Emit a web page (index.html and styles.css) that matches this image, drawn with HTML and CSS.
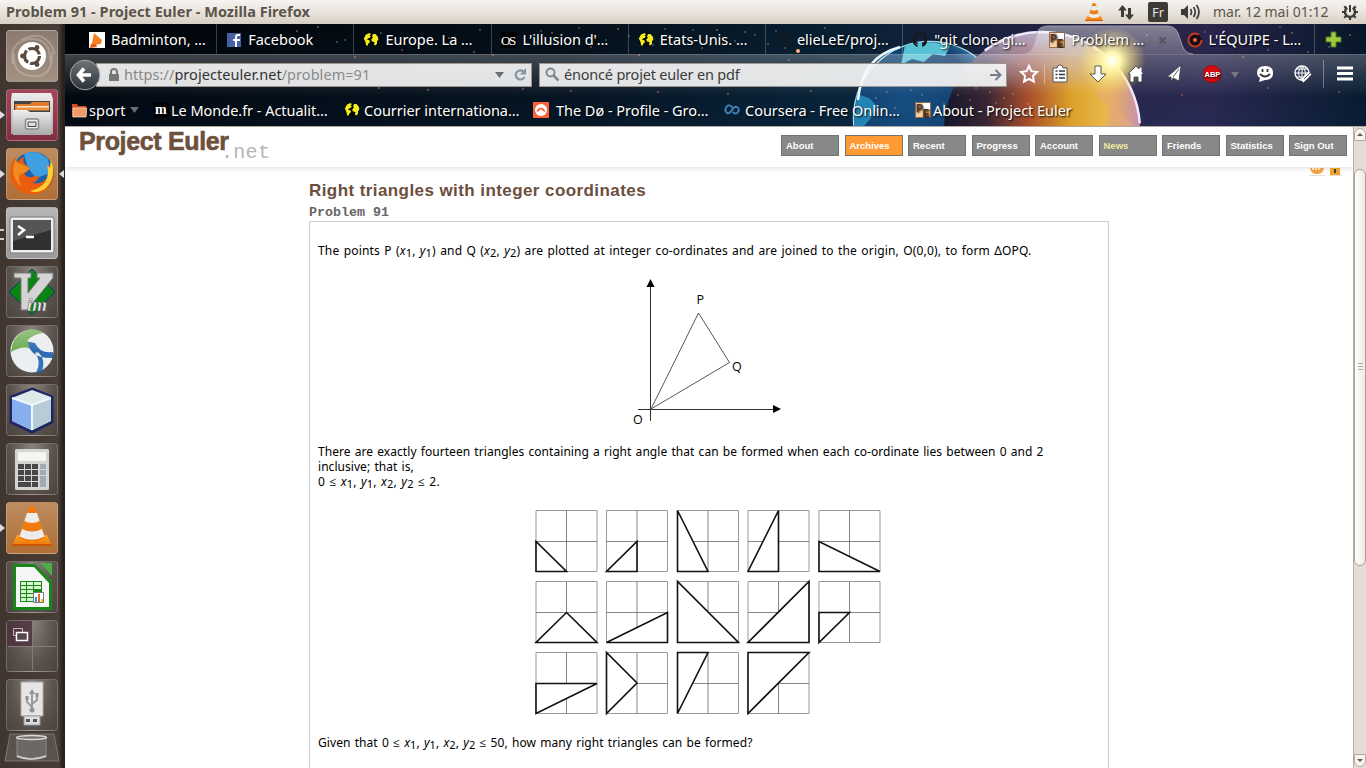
FILE: index.html
```html
<!DOCTYPE html>
<html lang="fr">
<head>
<meta charset="utf-8">
<title>Problem 91 - Project Euler</title>
<link rel="stylesheet" href="styles.css">
</head>
<body>
<svg class="defs" width="0" height="0">
  <defs>
    <linearGradient id="tileShine" x1="0" y1="0" x2="0" y2="1"><stop offset="0" stop-color="#fff" stop-opacity=".32"/><stop offset=".5" stop-color="#fff" stop-opacity=".06"/><stop offset="1" stop-color="#fff" stop-opacity=".13"/></linearGradient>
    <linearGradient id="silver" x1="0" y1="0" x2="0" y2="1"><stop offset="0" stop-color="#eee"/><stop offset="1" stop-color="#a9a9a9"/></linearGradient>
    <linearGradient id="orange" x1="0" y1="0" x2="0" y2="1"><stop offset="0" stop-color="#ffa52c"/><stop offset="1" stop-color="#ee7200"/></linearGradient>
    <symbol id="globe" viewBox="0 0 16 16"><circle cx="8" cy="8" r="7.6" fill="#050a08"/><path d="M.8 6.500L3 2.500 6.500 1 8 2.300 6.400 3.600 8 4.500 6.400 6 5 6.500 4 7.500 6.500 8.500 7 10 5 12 4.500 14 3 13 2.500 10zM9 4.500L10 2 12.500 2 15 5 15.300 8 14 9 14 12 12 13.500 11 12.500 11.500 10 9 9.500 8.200 7.500 10 5.500z" fill="#f4ec1f"/></symbol>
    <symbol id="github" viewBox="0 0 16 16"><path d="M8 .5A7.5 7.5 0 0 0 5.6 15V12.7Q3.8 13 3 11.3 3.9 11.2 4.5 12L5.8 12Q6 11.2 6.4 10.9 3 10.4 3.3 6.9 3.3 5.6 4.1 4.9L4.2 2.9 6.1 3.6 9.9 3.6 11.8 2.9 11.9 4.9Q12.7 5.7 12.7 7 12.8 10.4 9.600 10.9 10.2 11.3 10.2 12.5V15A7.5 7.5 0 0 0 8 .5z" fill="#15191d"/></symbol>
    <symbol id="pe" viewBox="0 0 16 16"><path d="M.5.5h15v15H.5z" fill="#fff" stroke="#8d6c53"/><path d="M1 1h7v14H1z" fill="#fad0a5"/><path d="M8 8h7v7H8z" fill="#f5a556"/><text x="1" y="10" class="pe-letter">P</text><text x="7.500" y="14.500" class="pe-letter">E</text></symbol>
    <symbol id="cone" viewBox="0 0 44 44"><path d="M7 31H37L42 42H2z" fill="url(#orange)"/><path d="M19 3Q22 1 25 3L35 34Q22 41 9 34z" fill="#f07c10"/><path d="M17 9h10l2.600 8Q22 21 14.400 17zM12 25Q22 30 32 25l2.500 7.500Q22 39 9.500 32.500z" fill="#ececea"/><path d="M3 40h38l1 2H2z" fill="#c95400"/></symbol>
  </defs>
</svg>

<header class="topbar">
  <span class="window-title">Problem 91 - Project Euler - Mozilla Firefox</span>
  <div class="indicators">
    <svg class="ind-cone" width="20" height="22"><use href="#cone"/></svg>
    <svg class="ind-net" width="18" height="17"><path d="M5.500 1L10 6.500H7V13H4V6.500H1zM12.500 16L17 10.500H14V4H11V10.500H8z" fill="#3c3b37"/></svg>
    <span class="ind-lang">Fr</span>
    <svg class="ind-sound" width="20" height="16"><path d="M1 5h3l4-4v14l-4-4H1z" fill="#3c3b37"/><path d="M10.500 5q2 3 0 6M13.500 3q3.500 5 0 10M16.500 1q5 7 0 14" fill="none" stroke="#3c3b37" stroke-width="1.700"/></svg>
    <span class="clock">mar. 12 mai 01:12</span>
    <svg class="ind-gear" width="18" height="18" viewBox="0 0 18 18"><g fill="none" stroke="#3c3b37"><path d="M6.200 4.800A5 5 0 1 0 11.800 4.800" stroke-width="2.400"/><path d="M9 2v7" stroke-width="2"/><path d="M1 9h2.500M14.500 9H17M3.300 3.300l2 2M14.700 3.300l-2 2M3.300 14.700l2-2M14.700 14.700l-2-2M9 14v3" stroke-width="2.200"/></g></svg>
  </div>
</header>

<div class="desktop">
  <nav class="launcher">
    <div class="tile dash"><svg viewBox="0 0 52 52"><path d="M7 34Q2 12 24 9 45 8 44 31M15 10Q40-3 49 24M8 24Q6 47 31 46 47 45 46 22" fill="none" stroke="#fff" stroke-opacity=".22" stroke-width="2"/><circle cx="26" cy="26" r="14" fill="#fff"/><circle cx="26" cy="26" r="7.500" fill="none" stroke="#594b42" stroke-width="3.200" stroke-dasharray="13.700 2"/><g fill="#594b42"><circle cx="16.500" cy="26" r="2.400"/><circle cx="31" cy="17.500" r="2.400"/><circle cx="31" cy="34.500" r="2.400"/></g></svg></div>
    <div class="tile files running"><svg viewBox="0 0 52 52"><path d="M6 4h39l2 6v35H5V10z" fill="url(#silver)"/><path d="M8 12h36v12H8z" fill="#444"/><path d="M9 15h15l2-2h17v8H9z" fill="#e07b2b"/><path d="M11 17h32v3H11z" fill="#ffe6c8"/><path d="M10 18.500h33v3H10z" fill="#ed9242"/><path d="M7 21h14l3 2h21v23H7z" fill="url(#silver)"/><rect x="19.500" y="30" width="13" height="10" rx="2" fill="#eee" stroke="#888" stroke-width="1.500"/><path d="M22 33h8v4.500h-8z" fill="#ddd" stroke="#444"/></svg></div>
    <div class="tile firefox running active"><svg viewBox="0 0 52 52"><circle cx="27" cy="25" r="21" fill="#1c62ab"/><path d="M18 6Q30 0 42 11L45 25 30 30 22 20z" fill="#3f9fe0"/><path d="M45 14Q52 29 41 41 30 50 18 45 4 39 4 25 4 16 9 10L12 14Q14 10 18 9 16 14 20 17L24 20Q21 25 18 25 20 30 26 29 30 27 33 29 31 34 26 35 36 37 41 30 43 24 41 17 44 20 45 14z" fill="#e95d0c"/><path d="M45 12Q51 28 40 40 32 46 24 43 38 40 41 30 43 24 41 17L44 20z" fill="#fdcf31"/><path d="M9 12Q3 29 16 39 9 26 18 25L24 20 17 17 12 15z" fill="#f18a20"/></svg></div>
    <div class="tile terminal running2"><svg viewBox="0 0 52 52"><rect x="4" y="10" width="44" height="36" rx="2" fill="#eee" stroke="#777"/><path d="M7 13h38v30H7z" fill="#303030"/><path d="M7 13h38v10L7 34z" fill="#555"/><path d="M12 19l6 4-6 5M20 30h8" fill="none" stroke="#fff" stroke-width="2.500"/></svg></div>
    <div class="tile plain"><svg viewBox="0 0 52 52"><path d="M26 3L49 26 26 49 3 26z" fill="#078412" stroke="#10356a"/><path d="M8 7h17v5h-3v15L34 12h-3V7h16v5L21 44h-6V12H8z" fill="#d4d4d4" stroke="#777"/><text x="21" y="45" class="vim">im</text></svg></div>
    <div class="tile plain"><svg viewBox="0 0 52 52"><circle cx="26" cy="26" r="21.500" fill="#e8edef"/><path d="M5 27Q6 12 17 7 28 1 37 8 27 9 21 16 31 18 35 28L29 27Q20 18 5 27z" fill="#65a84a"/><path d="M22 17Q24 34 47 33L47 27Q34 29 29 18zM32 27Q40 34 36 47L30 48Q36 36 29 28z" fill="#1e61ae"/><circle cx="26" cy="26" r="21.500" fill="url(#tileShine)"/></svg></div>
    <div class="tile plain"><svg viewBox="0 0 52 52"><path d="M26 5L46 13V38L26 48 5 38V13z" fill="#cfdfe8" stroke="#202765" stroke-width="3"/><path d="M6 14L26 21V46L6 37z" fill="#89aef0"/><path d="M26 21L45 14V37L26 46z" fill="#b8ccd6"/><path d="M26 6L45 13 26 21 6 14z" fill="#dcebea"/><path d="M26 21v25M6 14l20 7 19-7" fill="none" stroke="#eef8ff" stroke-width="2"/></svg></div>
    <div class="tile plain"><svg viewBox="0 0 52 52"><rect x="9" y="6" width="34" height="41" rx="1.500" fill="#d5d4d1"/><path d="M12 9h28v9H12z" fill="#f5f5f2"/><g fill="#484848"><path d="M12 21h6v5h-6zM19 21h6v5h-6zM26 21h6v5h-6zM12 27h6v5h-6zM19 27h6v5h-6zM26 27h6v5h-6zM12 33h6v5h-6zM19 33h6v5h-6zM26 33h6v5h-6zM12 39h13v5H12zM26 39h6v5h-6z"/></g><path d="M34 21h6v5h-6zM34 27h6v5h-6zM34 33h6v11h-6z" fill="#9faeb6"/></svg></div>
    <div class="tile vlc running"><svg viewBox="0 0 52 52"><use href="#cone" x="4" y="2" width="44" height="44"/></svg></div>
    <div class="tile plain"><svg viewBox="0 0 52 52"><path d="M7 3h22l17 17v29H7z" fill="#188618"/><path d="M34 2h12v13z" fill="#4bad43"/><path d="M10 6h18l15 16v24H10z" fill="#f6f6f6"/><path d="M14 20h22v21H14z" fill="#188618"/><path d="M15 21h5v3h-5zm6 0h6v3h-6zm7 0h7v3h-7zM15 25h5v3h-5zm6 0h6v3h-6zm7 0h7v3h-7zM15 29h5v3h-5zm6 0h6v3h-6zM15 33h5v3h-5zm6 0h6v3h-6zM15 37h5v3h-5zm6 0h6v3h-6z" fill="#d7f5cf"/><path d="M27.500 31.500h10v10h-10z" fill="#fff" stroke="#777"/><path d="M29 36h2v5h-2z" fill="#289ce2"/><path d="M32 33h2v8h-2z" fill="#df6a24"/><path d="M35 38h2v3h-2z" fill="#f0b626"/></svg></div>
    <div class="tile plain"><svg viewBox="0 0 52 52"><path d="M1 1h25v25H1z" fill="#4b303b" opacity=".8"/><path d="M26.500 2v48M2 26.500h48" stroke="#837b75"/><path d="M7.500 8.500h9v7h-9z" fill="none" stroke="#bbb"/><path d="M10.500 12.500h11v8h-11z" fill="#5a4650" stroke="#fff" stroke-width="1.500"/></svg></div>
    <div class="tile plain"><svg viewBox="0 0 52 52"><path d="M15 3h22v34H15z" fill="#e5e5e5" stroke="#aaa"/><path d="M18 37h16v9H18z" fill="#ddd" stroke="#999"/><path d="M20 40h4v3h-4zM27 40h4v3h-4z" fill="#555"/><path d="M26 12v19M26 28l-5-5v-4M26 25l5-4v-5" fill="none" stroke="#929292" stroke-width="1.700"/><circle cx="26" cy="31" r="2.500" fill="#929292"/><path d="M23 15l3-5 3 5zM19.500 17h3v4h-3zM29.500 14h3v4h-3z" fill="#929292"/></svg></div>
    <svg class="trash" viewBox="0 0 56 31" width="56" height="31"><path d="M6 1H50L55 28H1z" fill="#5a524c" stroke="#7d766f"/><path d="M13 5h29v19Q27 29 13 24z" fill="#6d6864" stroke="#8d8984"/><ellipse cx="27.500" cy="4.500" rx="15" ry="2" fill="#77736f" stroke="#ddd" stroke-width="1.300"/><path d="M13 23Q27 29 42 23" fill="none" stroke="#d6d4d0" stroke-width="1.500"/></svg>
  </nav>

  <main class="browser">
    <section class="chrome">
      <svg class="theme" width="1301" height="102" viewBox="65 24 1301 102">
        <defs>
          <linearGradient id="sky"><stop offset="0" stop-color="#010409"/><stop offset=".4" stop-color="#061421"/><stop offset=".6" stop-color="#0a273f"/><stop offset=".78" stop-color="#302b55"/><stop offset=".88" stop-color="#342d5c"/><stop offset="1" stop-color="#071c31"/></linearGradient>
          <linearGradient id="low" x1="0" y1="0" x2="0" y2="1"><stop offset="0" stop-color="#000" stop-opacity=".2"/><stop offset="1" stop-color="#08213c" stop-opacity=".25"/></linearGradient>
          <radialGradient id="earth" cx=".35" cy=".4" r=".7"><stop offset="0" stop-color="#164e82"/><stop offset=".6" stop-color="#123e6c"/><stop offset="1" stop-color="#5ab1dd"/></radialGradient>
          <linearGradient id="warm"><stop offset="0" stop-color="#14182d"/><stop offset=".22" stop-color="#392533"/><stop offset=".43" stop-color="#a84e2c"/><stop offset=".65" stop-color="#dca029"/><stop offset=".82" stop-color="#e8b84a"/><stop offset="1" stop-color="#c891ae"/></linearGradient>
          <linearGradient id="haze" x1="0" y1="0" x2="0" y2="1"><stop offset="0" stop-color="#b4aed2" stop-opacity=".95"/><stop offset=".3" stop-color="#b4aed2" stop-opacity="0"/></linearGradient>
          <radialGradient id="sun"><stop offset="0" stop-color="#fff"/><stop offset=".25" stop-color="#fff69b"/><stop offset="1" stop-color="#ffcf28" stop-opacity="0"/></radialGradient>
        </defs>
        <path d="M65 24h1301v103H65z" fill="url(#sky)"/><path d="M65 24h1301v103H65z" fill="url(#low)"/>
        <g fill="none" stroke-linecap="round" stroke-width="1.800">
          <path stroke="#b5623e" opacity=".85" d="M297 31h0M318 27h0M355 57h0M379 88h0M402 50h0M428 90h0M449 38h0M474 52h0M493 55h0M523 89h0M536 42h0M552 33h0M571 91h0M591 47h0M618 29h0M639 55h0M658 92h0M684 37h0M702 48h0M717 30h0M728 94h0M745 32h0M768 44h0M789 60h0M802 39h0M811 91h0M825 28h0M1147 35h0M1182 95h0M1200 43h0M1224 31h0M1243 57h0M1268 88h0M1292 33h0M1308 52h0M1339 92h0M1350 35h0"/>
          <path stroke="#3b7d86" opacity=".8" d="M337 42h0M345 40h0M381 33h0M424 43h0M480 30h0M515 44h0M541 31h0M579 28h0M606 40h0M629 36h0M653 45h0M665 29h0M693 30h0M710 45h0M735 41h0M755 35h0M776 31h0M785 48h0M838 35h0M1205 32h0M1240 39h0M1268 50h0M1280 27h0M1329 47h0"/>
        </g>
        <circle cx="798" cy="51" r="2" fill="#ffb481"/>
        <circle cx="930" cy="118" r="76.500" fill="url(#earth)" stroke="#a2def8" stroke-width="1.500"/>
        <path d="M905 45Q927 39 950 46L945 56 933 54 924 62 912 59 901 65z" fill="#58c2d4"/><path d="M857 94l12 4 10 10-8 10-7 8H854z" fill="#2384b4"/>
        <path d="M858 100Q862 57 900 47" fill="none" stroke="#e3faff" stroke-width="2.500"/>
        <circle cx="1042" cy="130" r="98" fill="url(#warm)"/><circle cx="1042" cy="130" r="98" fill="url(#haze)"/>
        <circle cx="1042" cy="130" r="98" fill="none" stroke="#f1e7ff" stroke-width="2.500" stroke-dasharray="208 500" stroke-dashoffset="-400"/>
        <path d="M1103 82l15 9 2 18 14 18h-29l5-18-14-15z" fill="#e7a979" opacity=".55"/>
        <path stroke="#fac172" stroke-linecap="round" stroke-width="1.500" opacity=".65" d="M876 98h0M887 92h0M895 108h0M903 85h0M911 90h0M922 95h0M944 104h0M958 95h0M966 117h0M976 88h0M982 112h0M990 92h0M996 103h0M1002 79h0M1008 113h0M1013 94h0M1019 64h0M1028 104h0M984 77h0M970 100h0M1004 98h0"/>
        <circle cx="1112" cy="61" r="34" fill="url(#sun)"/>
      </svg>
      <div class="tabs">
        <div class="tab"><svg width="16" height="16"><path d="M0 0h16v16H0z" fill="#fff"/><path d="M5 1l8 7-1 4-6 1-4 2 1-4z" fill="#f58120"/><path d="M2 12h5l1 3-7 1z" fill="#e85b13"/></svg><span>Badminton, …</span></div>
        <div class="tab"><svg width="16" height="16"><path d="M1 1h14v14H1z" fill="#4662a5"/><path d="M9 15V9h-2V7h2V5q0-3 3-3h2v2h-2q-1 0-1 1v2h3v2h-3v6z" fill="#fff"/></svg><span>Facebook</span></div>
        <div class="tab"><svg width="16" height="16"><use href="#globe"/></svg><span>Europe. La …</span></div>
        <div class="tab"><svg width="16" height="16"><path d="M0 0h16v16H0z"/><text x="0" y="13" class="os">OS</text></svg><span>L'illusion d'…</span></div>
        <div class="tab"><svg width="16" height="16"><use href="#globe"/></svg><span>Etats-Unis. …</span></div>
        <div class="tab"><svg width="16" height="16"><use href="#github"/></svg><span>elieLeE/proj…</span></div>
        <div class="tab nosep"><svg width="16" height="16"><use href="#github"/></svg><span>"git clone gi…</span></div>
        <div class="tab current"><svg class="tab-shape" width="170" height="32" viewBox="0 0 170 32"><defs><linearGradient id="tabFill" x1="0" y1="0" x2="0" y2="1"><stop offset="0" stop-color="#fff" stop-opacity=".42"/><stop offset="1" stop-color="#fff" stop-opacity=".25"/></linearGradient></defs><path d="M0 31Q8 31 11 22L14 10Q16 3 25 3H144Q152 3 155 10L159 22Q162 31 170 31z" fill="url(#tabFill)"/><path d="M0 31Q8 31 11 22L14 10Q16 3 25 3H144Q152 3 155 10L159 22Q162 31 170 31" fill="none" stroke="#aaa7b4" stroke-opacity=".8"/></svg><svg class="tab-icon" width="16" height="16"><use href="#pe"/></svg><span class="tab-label">Problem …</span><svg class="tab-close" width="9" height="9"><path d="M1.500 1.500l6 6M7.500 1.500l-6 6" stroke="#55545b" stroke-width="2"/></svg></div>
        <div class="tab"><svg width="16" height="16"><circle cx="8" cy="8" r="6.500" fill="#170d10" stroke="#c63a1d" stroke-width="2" stroke-dasharray="34 7"/><circle cx="8" cy="8" r="2" fill="#ef6b3b"/></svg><span>L'ÉQUIPE - L…</span></div>
        <svg class="newtab" width="17" height="17"><path d="M6 1h5v5h5v5h-5v5H6v-5H1V6h5z" fill="#9bcb3c" stroke="#4f7327"/></svg>
      </div>
      <div class="toolbar">
        <svg class="back" width="32" height="32"><defs><linearGradient id="backFill" x1="0" y1="0" x2="0" y2="1"><stop offset="0" stop-color="#6f7377"/><stop offset="1" stop-color="#2a323b"/></linearGradient></defs><circle cx="16" cy="16" r="14.800" fill="url(#backFill)" stroke="#a1a4a8"/><path d="M15 9.500L9.500 16 15 22.500M10.500 16H22" fill="none" stroke="#fff" stroke-width="3.600"/></svg>
        <div class="field url"><svg width="12" height="14"><path d="M1 6h10v7H1z" fill="#777"/><path d="M3 7V4q0-3 3-3t3 3v3" fill="none" stroke="#777" stroke-width="2"/></svg><span>https://<b>projecteuler.net</b>/problem=91</span><svg class="drop" width="9" height="6"><path d="M0 0h9L4.500 6z" fill="#6b6e72"/></svg><svg class="reload" width="13" height="14"><path d="M10.500 9A4.600 4.600 0 1 1 9.500 3.500" fill="none" stroke="#8296a5" stroke-width="2.200"/><path d="M12 0v6.500H6z" fill="#8296a5"/></svg></div>
        <div class="field search"><svg width="15" height="15"><circle cx="5.500" cy="5.500" r="4" fill="none" stroke="#85888b" stroke-width="2"/><path d="M8.500 8.500l5 5" stroke="#85888b" stroke-width="2.500"/></svg><span>énoncé projet euler en pdf</span><svg class="go" width="12" height="12"><path d="M0 6h10M5.500 1L10.500 6l-5 5" fill="none" stroke="#747d89" stroke-width="2"/></svg></div>
        <svg class="tools" width="344" height="32" viewBox="0 0 344 32"><g fill="#fff" stroke="#343640" stroke-width=".8"><path d="M14 8l2.400 5.200 5.600.7-4.100 4 1 5.600L14 20.800l-4.900 2.700 1-5.600-4.100-4 5.600-.7z" fill="none" stroke="#fff" stroke-width="2"/><path d="M38 10h4q0-3 3-3t3 3h4v14H38z"/><path d="M40.500 13h2M44 13h6M40.500 16.500h2M44 16.500h6M40.500 20h2M44 20h6" stroke-width="1.500"/><path d="M80 8h6v8h5l-8 8-8-8h5z"/><path d="M113 16l8-8 3 3V9h3v5l2 2h-2v8h-4v-5h-4v5h-4v-8z"/><path d="M152 19l14-12-2 16-6-3-2 4v-5z"/><path d="M158 19l6-8" fill="none"/></g><path d="M193 8h8l4 4v8l-4 4h-8l-4-4v-8z" fill="#d70e11" stroke="#a40000"/><text x="189.500" y="19" class="abp">ABP</text><path d="M216 14h8l-4 6z" fill="#777982"/><g fill="#fff"><path d="M250 8q8 0 8 7t-8 7l-6 2 1-4q-3-2-3-5 0-7 8-7z"/></g><path d="M247.500 11v3M252.500 11v3M245 16q5 5 10 0" stroke="#343640" stroke-width="1.800" fill="none"/><g fill="none" stroke="#fff"><circle cx="287" cy="15" r="7" stroke-width="1.400"/><path d="M280 15h14M287 8v14M282 11h10M282 19h10M287 8q-7 7 0 14M287 8q7 7 0 14"/><path d="M287 23l8-8" stroke-width="4"/><path d="M289 21l6-6" stroke="#555" stroke-width="1"/></g><path d="M29.500 7v19M308.500 2v28" stroke="#fff" stroke-opacity=".35"/><path d="M322 10h16M322 15.500h16M322 21h16" stroke="#fff" stroke-width="3"/></svg>
      </div>
      <div class="bookmarks">
        <div class="bm b1"><svg width="16" height="15"><path d="M1 1h5l1 2h8v11H1z" fill="#cf4d1e"/><path d="M2 5h14l-1 9H2z" fill="#f09a6c" stroke="#ffe1cd" stroke-width=".7"/></svg><span>sport</span><svg class="bm-drop" width="9" height="6"><path d="M0 0h9L4.500 6z" fill="#686c70"/></svg></div>
        <div class="bm b2"><svg width="16" height="16"><path d="M0 0h16v16H0z"/><text x="2" y="12" class="monde">m</text></svg><span>Le Monde.fr - Actualit…</span></div>
        <div class="bm b3"><svg width="16" height="16"><use href="#globe"/></svg><span>Courrier internationa…</span></div>
        <div class="bm b4"><svg width="16" height="16"><path d="M0 0h16v16H0z" fill="#fa633a"/><circle cx="8" cy="8" r="6" fill="#fff"/><path d="M4 10Q3 7 8 5.500 13 7 12 10L10 9 8 7 6 9z" fill="#fa633a"/></svg><span>The Dø - Profile - Gro…</span></div>
        <div class="bm b5"><svg width="16" height="16"><path d="M8.500 5.500Q5 1.500 2.500 5T3 11Q5.500 12 8 8T13 5Q16 7 14 10T8.500 10" fill="none" stroke="#3e7fb5" stroke-width="2"/></svg><span>Coursera - Free Onlin…</span></div>
        <div class="bm b6"><svg width="16" height="16"><use href="#pe"/></svg><span>About - Project Euler</span></div>
      </div>
    </section>

    <section class="viewport">
      <div class="page">
        <div class="site-head">
          <div class="logo"><span class="logo-main">Project Euler</span><span class="logo-net">.net</span></div>
          <ul class="menu"><li>About</li><li class="on">Archives</li><li>Recent</li><li>Progress</li><li>Account</li><li class="news">News</li><li>Friends</li><li>Statistics</li><li>Sign Out</li></ul>
        </div>
        <svg class="status-icons" width="34" height="10"><path d="M1 0h14q-1 6-7 6T1 0z" fill="#f2a044"/><path d="M4 0v2M7 0v2M10 0v2" stroke="#fff3d8" stroke-width="1.500"/><path d="M0 7.500h16M20 7.500h13" stroke="#eadfd8"/><path d="M21 0h10v7H21z" fill="#eda12c"/><path d="M25 1h2v4h-2z" fill="#443b34"/></svg>
        <article class="content">
          <h2>Right triangles with integer coordinates</h2>
          <h3>Problem 91</h3>
          <div class="problem">
            <p class="p1">The points P (<i>x</i><sub>1</sub>, <i>y</i><sub>1</sub>) and Q (<i>x</i><sub>2</sub>, <i>y</i><sub>2</sub>) are plotted at integer co-ordinates and are joined to the origin, O(0,0), to form ΔOPQ.</p>
            <svg class="plot" width="180" height="160" viewBox="620 270 180 160"><path d="M650.500 284V421M638 409.500H778" stroke="#333" fill="none"/><path d="M650.500 279l4 8h-8zM781 409l-8-4v8z"/><path d="M651 409L698.500 313 729.500 362.500z" fill="none" stroke="#444" stroke-width=".9"/><text x="696.500" y="304">P</text><text x="732" y="371">Q</text><text x="633" y="424">O</text></svg>
            <p class="p2">There are exactly fourteen triangles containing a right angle that can be formed when each co-ordinate lies between 0 and 2<br>inclusive; that is,<br><span class="range">0 ≤ <i>x</i><sub>1</sub>, <i>y</i><sub>1</sub>, <i>x</i><sub>2</sub>, <i>y</i><sub>2</sub> ≤ 2.</span></p>
            <svg class="triangles" width="360" height="220" viewBox="0 0 360 220">
              <defs><g id="cell"><path d="M0 0H61V61H0z" fill="none" stroke="#999"/><path d="M30.500 0V61M0 31H61" stroke="#777" stroke-width=".9"/></g></defs>
              <g><use href="#cell" x="6" y="10.500"/><use href="#cell" x="76.500" y="10.500"/><use href="#cell" x="147.500" y="10.500"/><use href="#cell" x="218" y="10.500"/><use href="#cell" x="289" y="10.500"/><use href="#cell" x="6" y="81.500"/><use href="#cell" x="76.500" y="81.500"/><use href="#cell" x="147.500" y="81.500"/><use href="#cell" x="218" y="81.500"/><use href="#cell" x="289" y="81.500"/><use href="#cell" x="6" y="152.500"/><use href="#cell" x="76.500" y="152.500"/><use href="#cell" x="147.500" y="152.500"/><use href="#cell" x="218" y="152.500"/></g>
              <g fill="#fff" stroke="#111" stroke-width="1.600"><path d="M6 41.500v30h30.500zM107 41.500v30H76.500zM147.500 10.500v61H178zM248.500 10.500v61H218zM289 41.500v30h61zM36.500 112.500l30.500 30H6zM137.500 112.500v30h-61zM147.500 81.500v61h61zM279 81.500v61h-61zM289 112.500h30.500l-30.500 30zM6 183.500h61l-61 30zM76.500 152.500v61l30.500-30.500zM147.500 152.500H178l-30.500 61zM218 152.500h61l-61 61z"/></g>
            </svg>
            <p class="p3">Given that 0 ≤ <i>x</i><sub>1</sub>, <i>y</i><sub>1</sub>, <i>x</i><sub>2</sub>, <i>y</i><sub>2</sub> ≤ 50, how many right triangles can be formed?</p>
          </div>
        </article>
      </div>
      <div class="scroll"><span class="up"></span><span class="thumb"><i></i></span><span class="down"></span></div>
    </section>
  </main>
</div>
</body>
</html>
```
FILE: styles.css
```css
* { box-sizing: border-box; }
body { margin: 0; width: 1366px; height: 768px; overflow: hidden; background: #fff; font-family: "Noto Sans", "Open Sans", sans-serif; display: flex; flex-direction: column; }
svg { display: block; flex: none; }
.defs { position: absolute; }
.topbar { height: 24px; flex: none; display: flex; justify-content: space-between; align-items: center; padding: 0 7px 0 6px; background: linear-gradient(#f6f4f1, #e9e4dd 50%, #d8cec3); color: #5b544b; white-space: nowrap; }
.window-title { font-size: 14.500px; font-weight: 700; letter-spacing: .04px; margin-top: -2px; }
.indicators { display: flex; align-items: center; }
.ind-cone { margin-right: 13px; }
.ind-net { margin-right: 13px; }
.ind-lang { width: 20px; height: 20px; border-radius: 2px; background: #3c3b37; color: #e9e4dd; font-size: 13px; line-height: 20px; text-align: center; margin-right: 12px; }
.ind-sound { margin-right: 13px; }
.clock { width: 117px; font-size: 14px; margin-right: 11px; margin-top: -2px; }
.desktop { display: flex; height: 744px; }
.launcher { width: 65px; flex: none; background: linear-gradient(90deg, #40352f, #483c36 90%, #29211e 97%); padding: 6px 0 0 6px; display: flex; flex-direction: column; gap: 7px; }
.tile { position: relative; width: 52px; height: 52px; flex: none; border-radius: 4px; border: 1px solid rgba(255,255,255,.2); background: #554c46; }
.tile > svg { width: 52px; height: 52px; margin: -1px; }
.dash { background: linear-gradient(#8b7b70, #a39182); }
.files { background: linear-gradient(#a1485a, #822e40); }
.firefox, .vlc { background: linear-gradient(#bd8c5f, #b06f35); }
.terminal { background: linear-gradient(#b7b7b7, #999); }
.plain { background: radial-gradient(ellipse at 50% 0, #8c837d, #5b534d 60%, #4a423c); }
.running::before, .active::after { content: ""; position: absolute; top: 21px; border: 4px solid transparent; }
.running::before { left: -7px; border-left: 5px solid #ddd; border-right: 0; }
.active::after { left: 52px; border-right: 5px solid #ddd; border-left: 0; }
.running2::before { content: ""; position: absolute; left: -7px; top: 21px; width: 4px; height: 7px; border: solid #ccc; border-width: 2px 0; }
.trash { margin: -5px 0 0 -2px; }
.vim { font: italic bold 19px "Liberation Serif", serif; fill: #eee; stroke: #555; stroke-width: .5px; }
.browser { width: 1301px; display: flex; flex-direction: column; }
.chrome { position: relative; height: 103px; flex: none; display: flex; flex-direction: column; color: #fff; font-size: 14.500px; border-bottom: 1px solid #b3a89d; text-shadow: 1px 1px 2px #000; }
.theme { position: absolute; left: 0; top: 0; }
.chrome span { white-space: nowrap; }
.tabs { position: relative; height: 30px; padding-left: 15px; display: flex; }
.tab { position: relative; width: 137.200px; height: 30px; flex: none; padding: 2px 0 0 9px; display: flex; align-items: center; gap: 6px; border-right: 1px solid rgba(255,255,255,.22); }
.tab > span { margin-top: -2px; }
.nosep, .current { border-color: transparent; }
.tab-shape { position: absolute; left: -17px; top: -1px; }
.tab-icon, .tab-label { position: relative; }
.tab-close { position: absolute; left: 118px; top: 12px; }
.newtab { margin: 7px 0 0 10px; }
.toolbar { position: relative; height: 42px; flex: none; display: flex; align-items: center; padding: 0 0 2px 4px; border-top: 1px solid rgba(255,255,255,.35); background: linear-gradient(rgba(255,255,255,.24), rgba(255,255,255,.03) 90%, transparent); }
.back { position: relative; z-index: 1; }
.field { height: 24px; border: 1px solid #9c968f; background: rgba(248,248,248,.9); color: #3c3c3c; display: flex; align-items: center; text-shadow: none; }
.field span { margin-top: -2px; }
.url { width: 436px; margin-left: -5px; padding: 0 4px 0 11px; gap: 4px; color: #8a8a8a; letter-spacing: .05px; }
.url b { color: #333; font-weight: 400; }
.drop { margin-left: auto; }
.reload { margin-left: 6px; }
.search { width: 468px; margin-left: 7px; padding: 0 4px 0 5px; gap: 4px; letter-spacing: -.2px; }
.go { margin-left: auto; }
.tools { margin: -1px 0 0 8px; }
.abp { font: bold 7.500px "Liberation Sans", sans-serif; fill: #fff; }
.pe-letter { font: bold 10px "Liberation Sans", sans-serif; fill: #4d3528; }
.os { font: 13px "Liberation Serif", serif; fill: #fff; letter-spacing: -1.500px; }
.monde { font: bold 14px "Liberation Serif", serif; fill: #fff; }
.bookmarks { position: relative; height: 28px; display: grid; grid-template-columns: 82px 191px 189px 191px 191px 200px; padding-left: 6px; align-items: center; }
.bm { display: flex; align-items: center; gap: 2px; letter-spacing: -.03px; }
.b1 span { letter-spacing: .15px; }
.b3 { gap: 4px; }
.b4 { gap: 7px; }
.b5 { gap: 5px; }
.bm-drop { margin-left: 2px; }
.viewport { height: 641px; display: flex; overflow: hidden; background: #fff; }
.page { position: relative; width: 1288px; flex: none; }
.site-head { height: 40px; display: flex; justify-content: space-between; padding: 8px 6px 0 14px; box-shadow: 0 1px 6px rgba(0,0,0,.13); }
.logo { display: flex; font-family: "Liberation Sans", Arial, sans-serif; }
.logo-main { width: 142px; margin-top: -8px; font-size: 25px; line-height: 28px; font-weight: 700; letter-spacing: -.35px; color: #6d513c; -webkit-text-stroke: .6px #6d513c; white-space: nowrap; }
.logo-net { font: 20px/24px "Liberation Mono", "Courier New", monospace; color: #b5b5b5; margin-top: 6px; letter-spacing: .3px; }
.menu { list-style: none; margin: 0; padding: 0; display: flex; gap: 5.500px; }
.menu li { width: 58px; height: 21px; border: 1px solid #737373; background: #888; color: #fff; font: bold 9.500px/19px "Liberation Sans", Arial, sans-serif; padding-left: 4px; white-space: nowrap; }
.menu .on { background: #f93; }
.menu .news { color: #eee8a0; }
.status-icons { position: absolute; left: 1244px; top: 41px; }
.content { width: 800px; margin: 13px 0 0 244px; }
.content h2 { margin: 0; font: bold 17px/22px "Liberation Sans", Arial, sans-serif; letter-spacing: .42px; color: #6b4e3d; white-space: nowrap; }
.content h3 { margin: 2px 0 0; font: bold 13.330px/17px "Liberation Mono", "Courier New", monospace; color: #666; }
.problem { height: 560px; border: 1px solid #ccc; padding: 21px 8px 0; font-size: 12px; line-height: 15px; color: #000; display: flex; flex-direction: column; }
.problem p { margin: 0; white-space: nowrap; word-spacing: 1px; }
.problem sub { font-size: 11px; line-height: 0; vertical-align: -2px; }
.problem .p1 { letter-spacing: .17px; }
.plot { margin: 12px 0 0 302px; font: 12.500px "Open Sans", sans-serif; }
.p2 { padding-top: 14px; letter-spacing: .05px; }
.range { letter-spacing: .2px; }
.triangles { margin: 11px 0 0 212px; }
.p3 { padding-top: 15px; letter-spacing: .07px; }
.scroll { width: 13px; background: #e4ddd7; border-left: 1px solid #b9ada3; position: relative; }
.up, .down { position: absolute; left: 0; width: 12px; height: 13px; background: #f6f3f0; border: 1px solid #b5aaa1; border-radius: 6px 6px 0 0; }
.up { top: 1px; }
.down { bottom: 1px; border-radius: 0 0 6px 6px; }
.up::after, .down::after { content: ""; position: absolute; left: 2px; top: 4px; border: 3px solid transparent; border-bottom: 3px solid #665f59; border-top: 0; }
.down::after { border-top: 3px solid #665f59; border-bottom: 0; }
.thumb { position: absolute; left: 0; top: 42px; width: 12px; height: 397px; background: linear-gradient(90deg, #fff, #eee9e4); border: 1px solid #aaa098; border-radius: 6px; }
.thumb i { position: absolute; left: 3px; top: 193px; width: 5px; height: 7px; background: repeating-linear-gradient(#aaa 0 1px, transparent 1px 3px); }
```
